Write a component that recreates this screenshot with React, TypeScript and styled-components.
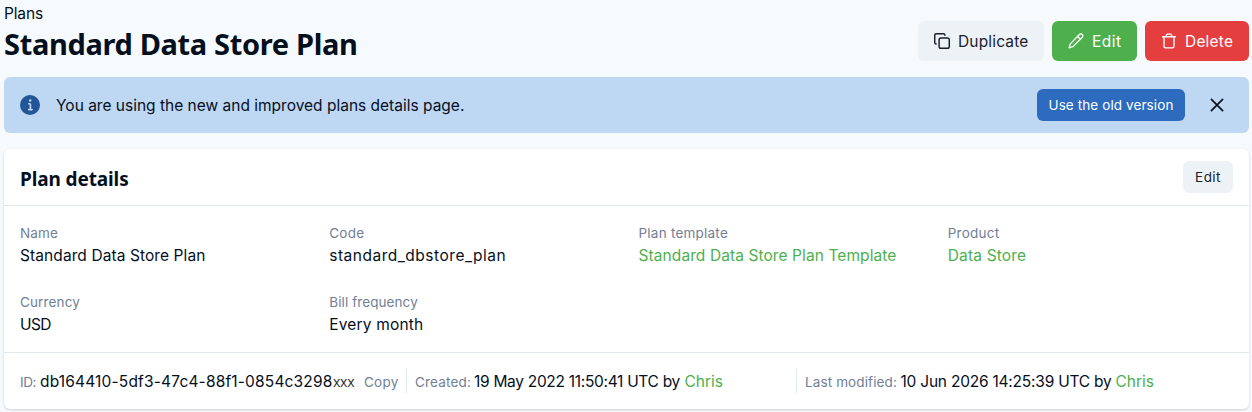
import React from "react";
import styled, { createGlobalStyle, css } from "styled-components";

const color = {
  page: "#f7fafc",
  text: "#050f1e",
  gray: "#edf2f7",
  line: "#e2e8f0",
  muted: "#718096",
  green: "#4db04d",
  red: "#e53e3e",
  blue: "#2d6bbf",
  banner: "#bed7f3",
  info: "#235597",
};

const GlobalStyle = createGlobalStyle`
  * { box-sizing: border-box; }
  body {
    margin: 0;
    background: ${color.page};
    color: ${color.text};
    font: 400 15.5px/24px Inter, "Liberation Sans", sans-serif;
  }
  h1, h2, dl, dd { margin: 0; }
  button { font: inherit; border: 0; padding: 0; cursor: pointer; }
  a { text-decoration: none; }
  svg { display: block; flex: none; }
`;

const Page = styled.main`
  width: 1252px;
  height: 412px;
  overflow: hidden;
  padding: 1px 3px 0 4px;
`;

const Text = styled.span<{ $track?: number }>`
  white-space: nowrap;
  letter-spacing: ${(p) => p.$track ?? 0}px;
`;

const PageHeader = styled.header`
  display: flex;
  justify-content: space-between;
  height: 76px;
`;

const Breadcrumb = styled.div`
  height: 25px;
  padding-top: 1px;
  letter-spacing: -0.14px;
`;

const Title = styled.h1`
  font: 700 29px/36px "Noto Sans", "Open Sans", sans-serif;
  letter-spacing: -0.34px;
  white-space: nowrap;
`;

const Actions = styled.div`
  display: flex;
  gap: 8px;
  padding-top: 20px;
`;

const tones = {
  plain: css`background: ${color.gray}; color: #1a202c;`,
  green: css`background: ${color.green}; color: #fff;`,
  red: css`background: ${color.red}; color: #fff;`,
};

const ActionButton = styled.button<{ $tone: keyof typeof tones; $width: number }>`
  display: flex;
  align-items: center;
  gap: 8px;
  width: ${(p) => p.$width}px;
  height: 40px;
  padding-left: 16px;
  border-radius: 6px;
  ${(p) => tones[p.$tone]}

  ${Text} {
    padding-top: 2px;
  }
`;

const SmallButton = styled.button<{ $primary?: boolean }>`
  height: 32px;
  width: ${(p) => (p.$primary ? 148 : 50)}px;
  border-radius: 6px;
  font-size: 13.5px;
  background: ${(p) => (p.$primary ? color.blue : color.gray)};
  color: ${(p) => (p.$primary ? "#fff" : "#1a202c")};
`;

const Banner = styled.section`
  display: flex;
  align-items: center;
  height: 56px;
  padding: 0 20px 0 16px;
  border-radius: 6px;
  background: ${color.banner};
`;

const BannerText = styled.div`
  flex: 1;
  padding: 2px 0 0 16px;
`;

const CloseButton = styled.button`
  margin-left: 20px;
  background: none;
  color: ${color.text};
`;

const Card = styled.section`
  height: 260px;
  margin-top: 16px;
  border-radius: 6px;
  background: #fff;
  box-shadow: 0 1px 3px rgba(0, 0, 0, 0.1), 0 1px 2px rgba(0, 0, 0, 0.08);
`;

const CardHeader = styled.header`
  display: flex;
  align-items: center;
  justify-content: space-between;
  height: 57px;
  padding: 0 16px;
  border-bottom: 1px solid ${color.line};
`;

const CardTitle = styled.h2`
  padding-top: 3px;
  font: 700 19px/24px "Noto Sans", "Open Sans", sans-serif;
  letter-spacing: -0.12px;
`;

const Fields = styled.dl`
  display: grid;
  grid-template-columns: repeat(4, 1fr);
  gap: 24px;
  padding: 16px;
`;

const Field = styled.div`
  height: 45px;
`;

const Label = styled.dt`
  font-size: 13.5px;
  line-height: 21px;
  padding-top: 1px;
  height: 21px;
  color: ${color.muted};
`;

const Value = styled.dd`
  padding-top: 1px;
`;

const Link = styled.a`
  color: ${color.green};
`;

const CardFooter = styled.footer`
  display: flex;
  align-items: center;
  height: 57px;
  padding: 0 16px;
  border-top: 1px solid ${color.line};
`;

const Meta = styled.div<{ $width?: number }>`
  display: flex;
  align-items: baseline;
  height: 24px;
  line-height: 26px;
  width: ${(p) => (p.$width ? `${p.$width}px` : "auto")};

  & + & {
    padding-left: 8px;
    border-left: 1px solid ${color.line};
  }
`;

const MetaLabel = styled.span<{ $width: number }>`
  width: ${(p) => p.$width}px;
  font-size: 13.5px;
  white-space: nowrap;
  color: ${color.muted};
`;

const MetaValue = styled.span<{ $width: number }>`
  width: ${(p) => p.$width}px;
  white-space: nowrap;
`;

const Redacted = styled.span`
  width: 31px;
  font: 400 14px/26px "Open Sans", sans-serif;
  letter-spacing: -0.25px;
  color: #2d2d2d;
`;

const CopyButton = styled.button`
  background: none;
  font-size: 13.5px;
  color: ${color.muted};
`;

const stroke = {
  fill: "none",
  stroke: "currentColor",
  strokeLinecap: "round" as const,
  strokeLinejoin: "round" as const,
};

const CopyIcon = () => (
  <svg width="16" height="16" viewBox="1 1 22 22" strokeWidth="2" {...stroke}>
    <rect x="8" y="8" width="14" height="14" rx="2.5" />
    <path d="M4 16c-1.1 0-2-.9-2-2V4c0-1.1.9-2 2-2h10c1.1 0 2 .9 2 2" />
  </svg>
);

const PencilIcon = () => (
  <svg width="16" height="16" viewBox="0 0 16 16" strokeWidth="1.3" {...stroke}>
    <path d="M11.4 1.5a1.9 1.9 0 0 1 2.9 2.7L5 13.6 1.1 14.9l1.2-4zM9.6 3.4l2.9 2.8" />
  </svg>
);

const TrashIcon = () => (
  <svg width="16" height="16" viewBox="0 0 16 16" strokeWidth="1.35" {...stroke}>
    <path d="M1.7 3.7h12.6M3 3.9v9.3c0 .9.7 1.6 1.6 1.6h6.8c.9 0 1.6-.7 1.6-1.6V3.9M5 3.5l.6-1.7c.15-.4.5-.7 1-.7h2.8c.5 0 .85.3 1 .7l.6 1.7" />
  </svg>
);

const CloseIcon = () => (
  <svg width="24" height="24" viewBox="0 0 24 24" strokeWidth="1.7" {...stroke}>
    <path d="M6.4 6.4l11.2 11.2M17.6 6.4L6.4 17.6" />
  </svg>
);

const InfoIcon = () => (
  <svg width="20" height="20" viewBox="0 0 24 24" fill={color.info}>
    <path d="M12,0A12,12,0,1,0,24,12,12.013,12.013,0,0,0,12,0Zm.25,5a1.5,1.5,0,1,1-1.5,1.5A1.5,1.5,0,0,1,12.25,5ZM14.5,18.5h-4a1,1,0,0,1,0-2h.75a.25.25,0,0,0,.25-.25v-4.5a.25.25,0,0,0-.25-.25H10.5a1,1,0,0,1,0-2h1a2,2,0,0,1,2,2v4.75a.25.25,0,0,0,.25.25h.75a1,1,0,1,1,0,2Z" />
  </svg>
);

interface FieldData {
  label: string;
  labelTrack: number;
  value: string;
  track: number;
  link?: boolean;
}

const fields: FieldData[] = [
  { label: "Name", labelTrack: 0.14, value: "Standard Data Store Plan", track: 0.09 },
  { label: "Code", labelTrack: 0.23, value: "standard_dbstore_plan", track: 0.51 },
  { label: "Plan template", labelTrack: 0.23, value: "Standard Data Store Plan Template", track: 0.09, link: true },
  { label: "Product", labelTrack: 0.25, value: "Data Store", track: 0.16, link: true },
  { label: "Currency", labelTrack: 0.14, value: "USD", track: -0.56 },
  { label: "Bill frequency", labelTrack: 0.09, value: "Every month", track: 0.17 },
];

export default function App() {
  return (
    <Page>
      <GlobalStyle />
      <PageHeader>
        <div>
          <Breadcrumb>Plans</Breadcrumb>
          <Title>Standard Data Store Plan</Title>
        </div>
        <Actions>
          <ActionButton $tone="plain" $width={126}>
            <CopyIcon />
            <Text $track={0.16}>Duplicate</Text>
          </ActionButton>
          <ActionButton $tone="green" $width={85}>
            <PencilIcon />
            <Text $track={0.5}>Edit</Text>
          </ActionButton>
          <ActionButton $tone="red" $width={104}>
            <TrashIcon />
            <Text $track={0.2}>Delete</Text>
          </ActionButton>
        </Actions>
      </PageHeader>

      <Banner>
        <InfoIcon />
        <BannerText>You are using the new and improved plans details page.</BannerText>
        <SmallButton $primary>
          <Text $track={0.1}>Use the old version</Text>
        </SmallButton>
        <CloseButton aria-label="Close">
          <CloseIcon />
        </CloseButton>
      </Banner>

      <Card>
        <CardHeader>
          <CardTitle>Plan details</CardTitle>
          <SmallButton>
            <Text $track={0.45}>Edit</Text>
          </SmallButton>
        </CardHeader>
        <Fields>
          {fields.map((f) => (
            <Field key={f.label}>
              <Label>
                <Text $track={f.labelTrack}>{f.label}</Text>
              </Label>
              <Value>
                <Text as={f.link ? Link : "span"} $track={f.track}>
                  {f.value}
                </Text>
              </Value>
            </Field>
          ))}
        </Fields>
        <CardFooter>
          <Meta $width={386}>
            <MetaLabel $width={20}>
              <Text $track={-0.42}>ID:</Text>
            </MetaLabel>
            <MetaValue $width={293}>
              <Text $track={0.17}>db164410-5df3-47c4-88f1-0854c3298</Text>
            </MetaValue>
            <Redacted>xxx</Redacted>
            <CopyButton>
              <Text $track={0.24}>Copy</Text>
            </CopyButton>
          </Meta>
          <Meta $width={390}>
            <MetaLabel $width={59}>
              <Text $track={0.17}>Created:</Text>
            </MetaLabel>
            <MetaValue $width={210.5}>
              <Text $track={-0.3}>19 May 2022 11:50:41 UTC by</Text>
            </MetaValue>
            <Link>Chris</Link>
          </Meta>
          <Meta>
            <MetaLabel $width={95.5}>
              <Text $track={0.12}>Last modified:</Text>
            </MetaLabel>
            <MetaValue $width={215}>
              <Text $track={-0.22}>10 Jun 2026 14:25:39 UTC by</Text>
            </MetaValue>
            <Link>Chris</Link>
          </Meta>
        </CardFooter>
      </Card>
    </Page>
  );
}
